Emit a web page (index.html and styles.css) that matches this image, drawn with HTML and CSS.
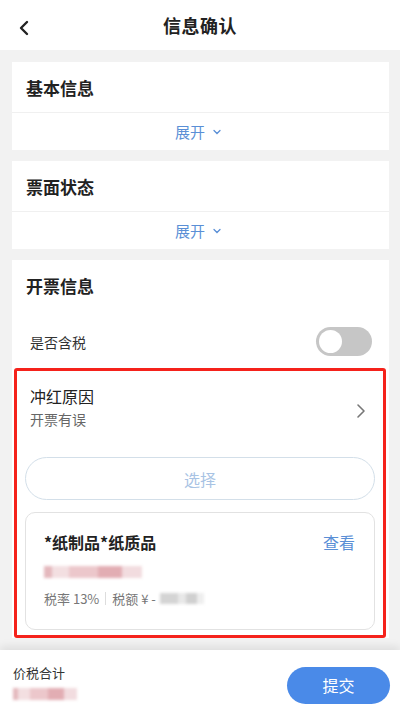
FILE: index.html
```html
<!DOCTYPE html>
<html lang="zh">
<head>
<meta charset="utf-8">
<link rel="stylesheet" href="styles.css">
</head>
<body>
<div class="app">
  <header class="nav">
    <svg class="back" width="14" height="16" viewBox="0 0 14 16"><path d="M10 2 L4 8 L10 14" fill="none" stroke="#222" stroke-width="2.4" stroke-linecap="round" stroke-linejoin="round"/></svg>
    <h1 class="nav-title">信息确认</h1>
  </header>
  <main class="content">
    <section class="card">
      <div class="card-title">基本信息</div>
      <div class="expand">展开 <svg width="10" height="8" viewBox="0 0 10 8"><path d="M2 2.5 L5 5.5 L8 2.5" fill="none" stroke="#5a8fd6" stroke-width="1.3" stroke-linecap="round"/></svg></div>
    </section>
    <section class="card">
      <div class="card-title">票面状态</div>
      <div class="expand">展开 <svg width="10" height="8" viewBox="0 0 10 8"><path d="M2 2.5 L5 5.5 L8 2.5" fill="none" stroke="#5a8fd6" stroke-width="1.3" stroke-linecap="round"/></svg></div>
    </section>
    <section class="card card-last">
      <div class="card-title plain">开票信息</div>
      <div class="row">
        <span class="row-label">是否含税</span>
        <span class="toggle"><span class="knob"></span></span>
      </div>
      <div class="mark">
        <div class="reason">
          <div class="reason-text">
            <div class="reason-title">冲红原因</div>
            <div class="reason-sub">开票有误</div>
          </div>
          <svg class="chev" width="10" height="16" viewBox="0 0 10 16"><path d="M2 2 L8 8 L2 14" fill="none" stroke="#777" stroke-width="1.6" stroke-linecap="round" stroke-linejoin="round"/></svg>
        </div>
        <div class="select-btn">选择</div>
        <div class="item">
          <div class="item-head">
            <span class="item-name">*纸制品*纸质品</span>
            <span class="item-link">查看</span>
          </div>
          <div class="blur pink"></div>
          <div class="item-meta">
            <span>税率 13%</span><span class="sep"></span><span>税额 ¥ -</span><span class="blur grey"></span>
          </div>
        </div>
      </div>
    </section>
  </main>
  <footer class="footer">
    <div class="total">
      <div class="total-label">价税合计</div>
      <div class="blur pink small"></div>
    </div>
    <button class="submit">提交</button>
  </footer>
</div>
</body>
</html>
```
FILE: styles.css
```css
* { box-sizing: border-box; }
html, body { margin: 0; padding: 0; }
body {
  font-family: "Noto Sans CJK SC", "Noto Sans", sans-serif;
  color: #1f1f1f;
  background: #f2f2f2;
}
.app {
  width: 400px;
  height: 714px;
  display: flex;
  flex-direction: column;
  overflow: hidden;
}
.nav {
  height: 50px;
  flex: none;
  background: #fff;
  display: flex;
  align-items: center;
  justify-content: center;
  position: relative;
}
.back { position: absolute; left: 17px; top: 20px; }
.nav-title {
  margin: 0;
  font-size: 18px;
  font-weight: 700;
  color: #222;
  letter-spacing: 0.5px;
}
.content {
  flex: 1;
  overflow: hidden;
  padding: 12px 11px 0 12px;
  display: flex;
  flex-direction: column;
  gap: 11px;
}
.card {
  background: #fff;
  flex: none;
}
.card-title {
  height: 51px;
  padding-left: 14px;
  display: flex;
  align-items: center;
  font-size: 17px;
  font-weight: 700;
  color: #222;
  border-bottom: 1px solid #f0f0f0;
}
.card-title.plain { border-bottom: none; height: 50px; }
.expand {
  height: 37px;
  display: flex;
  align-items: center;
  justify-content: center;
  gap: 7px;
  font-size: 15px;
  color: #5a8fd6;
  padding-right: 4px;
}
.row {
  height: 58px;
  display: flex;
  align-items: center;
  justify-content: space-between;
  padding: 5px 17px 0 18px;
}
.row-label { font-size: 14px; color: #333; }
.toggle {
  width: 56px;
  height: 29px;
  border-radius: 15px;
  background: #c6c6c6;
  display: flex;
  align-items: center;
  padding-left: 3px;
}
.knob {
  width: 23px;
  height: 23px;
  border-radius: 50%;
  background: #fff;
}
.mark {
  margin: 0 3px 0 2px;
  border: 3px solid #f5221b;
  border-radius: 3px;
  padding: 0 8px 5px 8px;
}
.reason {
  height: 86px;
  display: flex;
  align-items: flex-start;
  justify-content: space-between;
  padding: 14px 9px 0 5px;
}
.chev { margin-top: 18px; }
.reason-title { font-size: 16px; color: #222; line-height: 22px; }
.reason-sub { font-size: 14px; color: #666; line-height: 22px; margin-top: 1px; }
.select-btn {
  height: 43px;
  border: 1px solid #d3dfe9;
  border-radius: 22px;
  display: flex;
  align-items: center;
  justify-content: center;
  font-size: 16px;
  color: #a8c3e4;
}
.item {
  margin-top: 12px;
  height: 118px;
  border: 1px solid #e2e2e2;
  border-radius: 10px;
  padding: 17px 19px 0 18px;
}
.item-head {
  display: flex;
  justify-content: space-between;
  align-items: center;
  height: 24px;
}
.item-name { font-size: 16px; font-weight: 700; color: #222; }
.item-link { font-size: 16px; color: #5a8fd6; }
.blur { display: inline-block; filter: blur(1.5px); }
.blur.pink {
  display: block;
  margin-top: 12px;
  width: 98px;
  height: 12px;
  background: linear-gradient(90deg, #e4b8bd 0 8%, #f3dfe1 8% 26%, #ecc7cb 26% 55%, #e2adb3 55% 80%, #f2dcdf 80% 100%);
}
.blur.pink.small { width: 64px; margin-top: 6px; margin-left: 0; }
.item-meta {
  margin-top: 11px;
  display: flex;
  align-items: center;
  font-size: 13px;
  color: #777;
}
.sep {
  width: 1px;
  height: 13px;
  background: #ddd;
  margin: 0 6px;
}
.blur.grey {
  width: 44px;
  height: 11px;
  margin-left: 4px;
  background: linear-gradient(90deg, #d4d4d4 0 40%, #e8e8e8 40% 60%, #d0d0d0 60% 85%, #eee 85%);
}
.footer {
  height: 64px;
  flex: none;
  background: #fff;
  box-shadow: 0 -4px 8px rgba(0,0,0,0.08);
  display: flex;
  align-items: center;
  justify-content: space-between;
  padding: 0 10px 0 13px;
  position: relative;
}
.total-label { font-size: 13px; color: #333; line-height: 18px; }
.submit {
  width: 103px;
  height: 37px;
  border: none;
  border-radius: 19px;
  background: #4a8ae8;
  color: #fff;
  font-family: inherit;
  font-size: 16px;
  margin-top: 6px;
}
```
